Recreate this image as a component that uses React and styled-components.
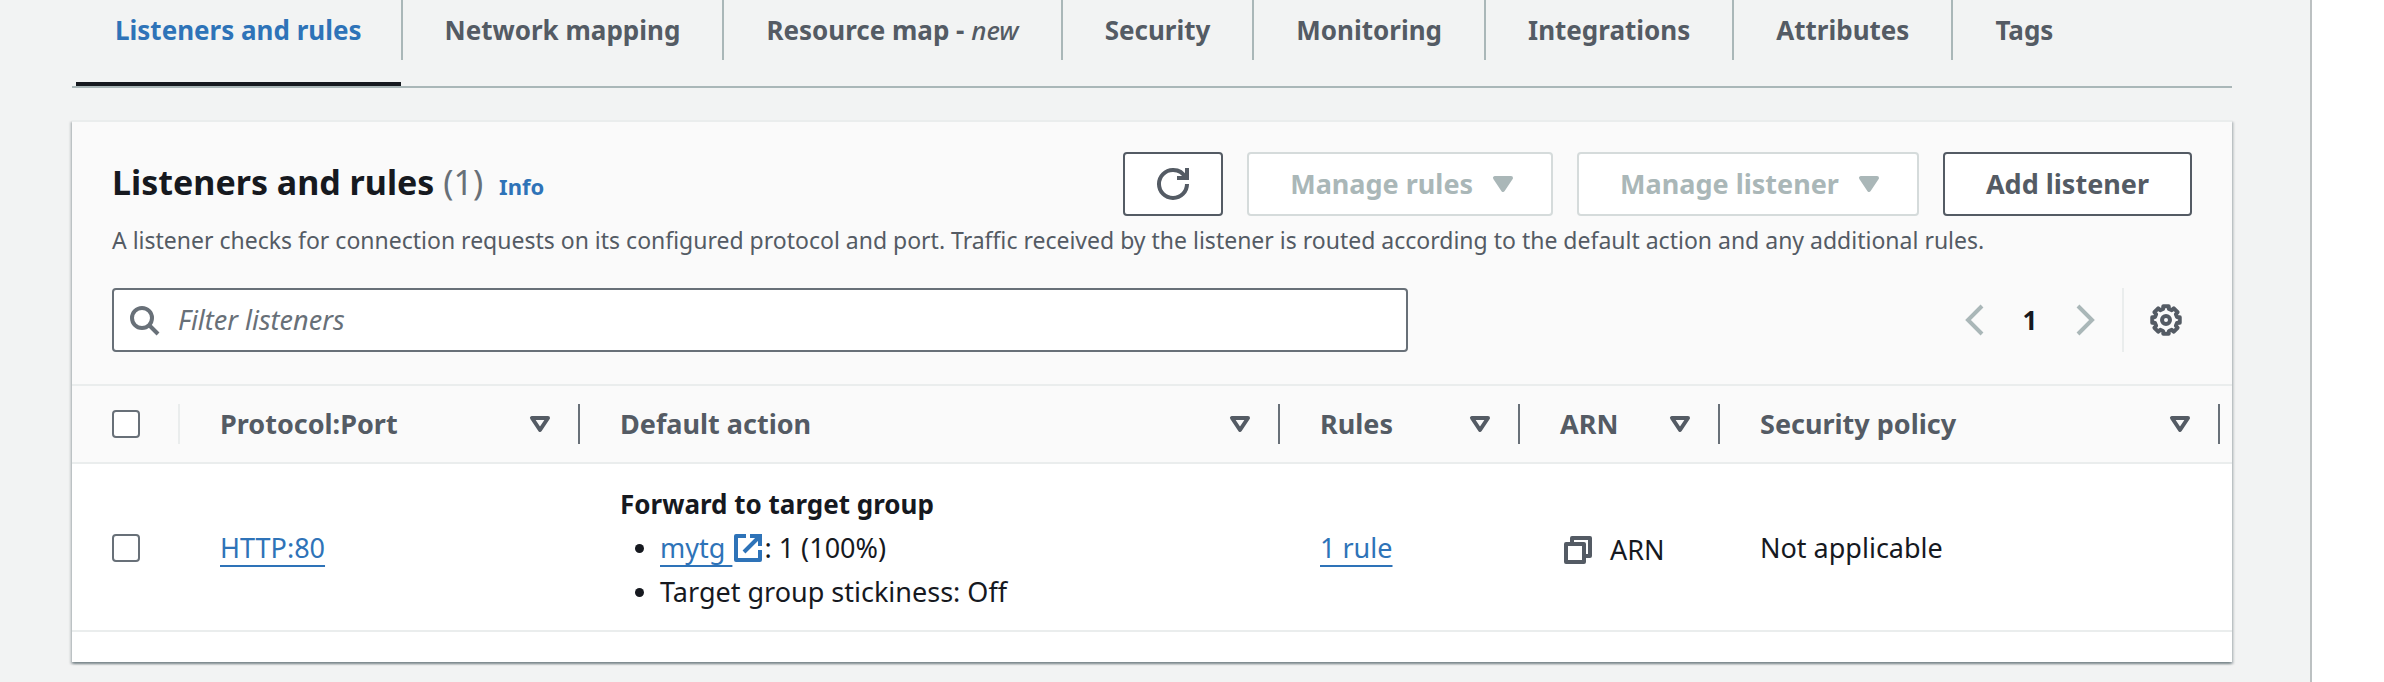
import React from "react";
import styled, { createGlobalStyle } from "styled-components";

const color = {
  page: "#f2f3f3",
  header: "#fafafa",
  line: "#eaeded",
  rule: "#aab7b8",
  ink: "#16191f",
  muted: "#545b64",
  control: "#687078",
  link: "#2e73b8",
  disabled: "#aab7b8",
  disabledBorder: "#d5dbdb",
};

const GlobalStyle = createGlobalStyle`
  *, *::before, *::after { box-sizing: border-box; }
  body {
    margin: 0;
    background: #fff;
    color: ${color.ink};
    font-family: "Noto Sans", "Open Sans", sans-serif;
    font-size: 27px;
    line-height: 44px;
  }
  h2, p, ul { margin: 0; padding: 0; }
  button, input { font: inherit; }
`;

const Page = styled.div`
  display: flex;
  min-height: 100vh;
`;

const Main = styled.main`
  flex: 1;
  min-width: 0;
  padding: 0 78px 20px 72px;
  background: ${color.page};
`;

const SidePanel = styled.aside`
  flex: none;
  width: 74px;
  background: #fff;
  border-left: 2px solid #bcc1c2;
`;

const TabList = styled.ul`
  display: flex;
  padding-left: 4px;
  list-style: none;
  border-bottom: 2px solid ${color.rule};
`;

const Tab = styled.li`
  padding-bottom: 22px;
  border-bottom: 4px solid ${(p) => (p.$active ? color.ink : "transparent")};
`;

const TabLink = styled.a`
  display: block;
  padding: 0 ${(p) => (p.$first ? "39px" : "42px")};
  border-left: ${(p) => (p.$first ? "none" : `2px solid ${color.rule}`)};
  color: ${(p) => (p.$active ? color.link : color.muted)};
  font-size: 26px;
  font-weight: 700;
  line-height: 60px;
  white-space: nowrap;
  text-decoration: none;

  em {
    font-weight: 500;
  }
`;

const Card = styled.section`
  margin-top: 32px;
  padding-bottom: 30px;
  background: #fff;
  border-top: 2px solid ${color.line};
  box-shadow:
    0 2px 2px 0 rgba(0, 28, 36, 0.3),
    2px 2px 2px 0 rgba(0, 28, 36, 0.15),
    -2px 2px 2px 0 rgba(0, 28, 36, 0.15);
`;

const CardHeader = styled.header`
  padding: 30px 40px 32px;
  background: ${color.header};
`;

const TitleRow = styled.div`
  display: flex;
  justify-content: space-between;
  align-items: flex-start;
  height: 64px;
`;

const TitleGroup = styled.div`
  display: flex;
  align-items: baseline;
  gap: 16px;
`;

const Title = styled.h2`
  font-size: 34px;
  font-weight: 700;
  line-height: 60px;
`;

const Count = styled.span`
  color: ${color.control};
  font-weight: 400;
`;

const InfoLink = styled.a`
  color: ${color.link};
  font-size: 22px;
  font-weight: 700;
  text-decoration: none;
`;

const Actions = styled.div`
  display: flex;
  gap: 24px;
`;

const Button = styled.button`
  display: flex;
  align-items: center;
  gap: 14px;
  height: 64px;
  padding: 0 ${(p) => (p.$iconOnly ? "32px" : "41px")};
  background: #fff;
  border: 2px solid ${color.muted};
  border-radius: 4px;
  color: ${color.muted};
  font-size: 27px;
  font-weight: 700;
  white-space: nowrap;

  &:disabled {
    padding-right: 32px;
    border-color: ${color.disabledBorder};
    color: ${color.disabled};
  }
`;

const Description = styled.p`
  margin-top: 8px;
  color: ${color.muted};
  font-size: 23px;
  line-height: 32px;
`;

const Tools = styled.div`
  display: flex;
  justify-content: space-between;
  align-items: center;
  margin-top: 32px;
`;

const SearchBox = styled.label`
  display: flex;
  align-items: center;
  gap: 18px;
  flex: 1;
  max-width: 1296px;
  height: 64px;
  padding: 0 14px;
  background: #fff;
  border: 2px solid ${color.control};
  border-radius: 4px;
  color: ${color.control};
`;

const SearchInput = styled.input`
  flex: 1;
  min-width: 0;
  padding: 0;
  background: none;
  border: none;
  outline: none;
  color: ${color.ink};

  &::placeholder {
    color: ${color.control};
    font-style: italic;
    opacity: 1;
  }
`;

const Pagination = styled.nav`
  display: flex;
  align-items: center;
`;

const IconButton = styled.button`
  display: flex;
  padding: 0;
  background: none;
  border: none;
  color: ${(p) => (p.disabled ? color.disabled : color.muted)};
`;

const PageNumber = styled.button`
  width: 76px;
  padding: 0;
  background: none;
  border: none;
  color: ${color.ink};
  font-size: 26px;
  font-weight: 700;
  text-align: center;
`;

const Preferences = styled.div`
  display: flex;
  align-items: center;
  height: 64px;
  margin-left: 22px;
  padding: 0 10px 0 26px;
  border-left: 2px solid ${color.line};
`;

const Table = styled.table`
  width: 100%;
  table-layout: fixed;
  border-collapse: separate;
  border-spacing: 0;
`;

const Col = styled.col`
  width: ${(p) => p.$width || "auto"};
`;

const HeadCell = styled.th`
  height: 80px;
  padding: 0 ${(p) => (p.$last ? "12px" : "0")} 0 0;
  background: ${color.header};
  border: solid ${color.line};
  border-width: 2px 0;
  color: ${color.muted};
  font-size: 27px;
  font-weight: 700;
  text-align: left;
`;

const HeadContent = styled.div`
  display: flex;
  justify-content: space-between;
  align-items: center;
  height: 40px;
  padding: 0 22px 0 40px;
  border-right: 2px solid ${(p) => (p.$light ? color.line : color.control)};
`;

const Cell = styled.td`
  padding: 18px 0 16px 40px;
  border-bottom: 2px solid ${color.line};
  vertical-align: middle;
`;

const Checkbox = styled.input`
  display: block;
  width: 28px;
  height: 28px;
  margin: 0;
  appearance: none;
  background: #fff;
  border: 2px solid ${color.control};
  border-radius: 4px;
`;

const TextLink = styled.a`
  color: ${color.link};
  text-decoration: underline 2px;
  text-decoration-skip-ink: none;
  text-underline-offset: 7px;
`;

const ActionTitle = styled.div`
  font-size: 26px;
  font-weight: 700;
`;

const TargetList = styled.ul`
  list-style: none;
`;

const TargetItem = styled.li`
  display: flex;
  align-items: center;

  &::before {
    content: "";
    width: 9px;
    height: 9px;
    margin: 0 16px 0 15px;
    background: ${color.ink};
    border-radius: 50%;
  }
`;

const CopyRow = styled.div`
  display: flex;
  align-items: center;
  gap: 16px;
  padding: 4px 0 0 2px;
`;

const Glyph = styled.svg`
  flex: none;
  width: 32px;
  height: 32px;
  fill: ${(p) => (p.$solid ? "currentColor" : "none")};
  stroke: currentColor;
  stroke-width: 2;
  vertical-align: ${(p) => (p.$inline ? "-6px" : "middle")};
`;

const Icon = ({ children, ...rest }) => (
  <Glyph viewBox="0 0 16 16" aria-hidden="true" {...rest}>
    {children}
  </Glyph>
);

const RefreshIcon = () => (
  <Icon>
    <path d="M10 5h5V0" />
    <path d="M15 8a6.957 6.957 0 0 1-7 7 6.957 6.957 0 0 1-7-7 6.957 6.957 0 0 1 7-7 6.87 6.87 0 0 1 6.3 4" />
  </Icon>
);
const CaretIcon = ({ solid }) => (
  <Icon $solid={solid}>
    <path strokeLinejoin="round" d="M4 5h8l-4 6z" />
  </Icon>
);
const SearchIcon = () => (
  <Icon>
    <circle cx="7" cy="7" r="5" />
    <path d="M10.5 10.5 15 15" />
  </Icon>
);
const PreviousIcon = () => (
  <Icon>
    <path d="M11 1 4 8l7 7" />
  </Icon>
);
const NextIcon = () => (
  <Icon>
    <path d="m5 1 7 7-7 7" />
  </Icon>
);
const ExternalIcon = () => (
  <Icon $inline>
    <path strokeLinejoin="round" d="M14 9v5H2V2h5" />
    <path d="M9 2h5v5M6 10l8-8" />
  </Icon>
);
const CopyIcon = () => (
  <Icon>
    <path strokeLinejoin="round" d="M2 5h9v9H2z" />
    <path strokeLinejoin="round" d="M5 5V2h9v9h-3" />
  </Icon>
);

// Eight teeth, each drawn as a flat tip between two points on the root circle.
const gearPath =
  "M" +
  Array.from({ length: 8 }, (_, k) =>
    [[-15, 5.7], [-11, 7], [11, 7], [15, 5.7]]
      .map(([offset, radius]) => {
        const angle = ((k * 45 + offset) * Math.PI) / 180;
        return `${(8 + radius * Math.cos(angle)).toFixed(2)} ${(8 + radius * Math.sin(angle)).toFixed(2)}`;
      })
      .join("L")
  ).join("L") +
  "Z";

const GearIcon = () => (
  <Icon>
    <path strokeLinejoin="round" d={gearPath} />
    <circle cx="8" cy="8" r="2" />
  </Icon>
);

const tabs = [
  "Listeners and rules",
  "Network mapping",
  <>Resource map - <em>new</em></>,
  "Security",
  "Monitoring",
  "Integrations",
  "Attributes",
  "Tags",
];

const columns = ["Protocol:Port", "Default action", "Rules", "ARN", "Security policy"];

export default function App() {
  return (
    <Page>
      <GlobalStyle />
      <Main>
        <TabList>
          {tabs.map((label, i) => (
            <Tab key={i} $active={i === 0}>
              <TabLink href="#" $active={i === 0} $first={i === 0}>
                {label}
              </TabLink>
            </Tab>
          ))}
        </TabList>

        <Card>
          <CardHeader>
            <TitleRow>
              <TitleGroup>
                <Title>
                  Listeners and rules <Count>(1)</Count>
                </Title>
                <InfoLink href="#">Info</InfoLink>
              </TitleGroup>
              <Actions>
                <Button $iconOnly aria-label="Refresh">
                  <RefreshIcon />
                </Button>
                <Button disabled>
                  Manage rules
                  <CaretIcon solid />
                </Button>
                <Button disabled>
                  Manage listener
                  <CaretIcon solid />
                </Button>
                <Button>Add listener</Button>
              </Actions>
            </TitleRow>
            <Description>
              A listener checks for connection requests on its configured protocol and port. Traffic received by the
              listener is routed according to the default action and any additional rules.
            </Description>
            <Tools>
              <SearchBox>
                <SearchIcon />
                <SearchInput type="text" placeholder="Filter listeners" aria-label="Filter listeners" />
              </SearchBox>
              <Pagination aria-label="Pagination">
                <IconButton disabled aria-label="Previous page">
                  <PreviousIcon />
                </IconButton>
                <PageNumber>1</PageNumber>
                <IconButton disabled aria-label="Next page">
                  <NextIcon />
                </IconButton>
                <Preferences>
                  <IconButton aria-label="Preferences">
                    <GearIcon />
                  </IconButton>
                </Preferences>
              </Pagination>
            </Tools>
          </CardHeader>

          <Table>
            <colgroup>
              <Col $width="108px" />
              <Col $width="400px" />
              <Col />
              <Col $width="240px" />
              <Col $width="200px" />
              <Col $width="512px" />
            </colgroup>
            <thead>
              <tr>
                <HeadCell>
                  <HeadContent $light>
                    <Checkbox type="checkbox" aria-label="Select all listeners" />
                  </HeadContent>
                </HeadCell>
                {columns.map((name, i) => (
                  <HeadCell key={name} $last={i === columns.length - 1}>
                    <HeadContent>
                      {name}
                      <IconButton aria-label={`Sort by ${name}`}>
                        <CaretIcon />
                      </IconButton>
                    </HeadContent>
                  </HeadCell>
                ))}
              </tr>
            </thead>
            <tbody>
              <tr>
                <Cell>
                  <Checkbox type="checkbox" aria-label="Select HTTP:80" />
                </Cell>
                <Cell>
                  <TextLink href="#">HTTP:80</TextLink>
                </Cell>
                <Cell>
                  <ActionTitle>Forward to target group</ActionTitle>
                  <TargetList>
                    <TargetItem>
                      <span>
                        <TextLink href="#">
                          mytg <ExternalIcon />
                        </TextLink>
                        : 1 (100%)
                      </span>
                    </TargetItem>
                    <TargetItem>Target group stickiness: Off</TargetItem>
                  </TargetList>
                </Cell>
                <Cell>
                  <TextLink href="#">1 rule</TextLink>
                </Cell>
                <Cell>
                  <CopyRow>
                    <IconButton aria-label="Copy ARN">
                      <CopyIcon />
                    </IconButton>
                    ARN
                  </CopyRow>
                </Cell>
                <Cell>Not applicable</Cell>
              </tr>
            </tbody>
          </Table>
        </Card>
      </Main>
      <SidePanel />
    </Page>
  );
}
